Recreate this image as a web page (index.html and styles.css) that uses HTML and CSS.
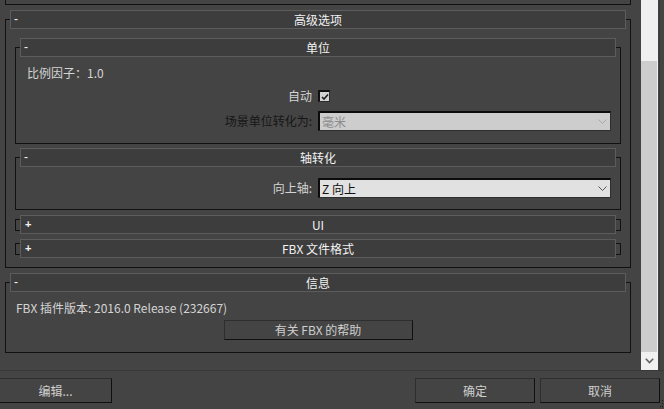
FILE: index.html
```html
<!DOCTYPE html>
<html lang="zh-CN">
<head>
    <meta charset="UTF-8">
    <title>FBX 导出 - 高级选项</title>
    <link rel="stylesheet" href="styles.css">
</head>
<body>
    <div class="main">
        <div class="panel">
            <div class="stub"></div>

            <!-- 高级选项 -->
            <section class="rollout top">
                <div class="rollout-head"><span class="sign">-</span><span class="title">高级选项</span></div>

                <section class="rollout sub unit">
                    <div class="rollout-head"><span class="sign">-</span><span class="title">单位</span></div>
                    <div class="scale">比例因子：1.0</div>
                    <div class="field-row check-row">
                        <span class="label">自动</span>
                        <span class="check">
                            <svg width="8" height="8" viewBox="0 0 8 8"><path d="M1 4 L3 6 L7 1.5" fill="none" stroke="#1e1e1e" stroke-width="1.6"/></svg>
                        </span>
                    </div>
                    <div class="field-row combo-row">
                        <span class="label disabled">场景单位转化为:</span>
                        <div class="combo off">
                            <span>毫米</span>
                            <svg class="chev" width="9" height="5" viewBox="0 0 9 5"><path d="M0.5 0.5 L4.5 4.5 L8.5 0.5" fill="none" stroke="#a8a8a8"/></svg>
                        </div>
                    </div>
                </section>

                <section class="rollout sub axis">
                    <div class="rollout-head"><span class="sign">-</span><span class="title">轴转化</span></div>
                    <div class="field-row combo-row">
                        <span class="label">向上轴:</span>
                        <div class="combo">
                            <span>Z 向上</span>
                            <svg class="chev" width="9" height="5" viewBox="0 0 9 5"><path d="M0.5 0.5 L4.5 4.5 L8.5 0.5" fill="none" stroke="#555"/></svg>
                        </div>
                    </div>
                </section>

                <section class="rollout sub closed ui">
                    <div class="rollout-head"><span class="sign plus">+</span><span class="title">UI</span></div>
                </section>

                <section class="rollout sub closed fmt">
                    <div class="rollout-head"><span class="sign plus">+</span><span class="title">FBX 文件格式</span></div>
                </section>
            </section>

            <!-- 信息 -->
            <section class="rollout top info">
                <div class="rollout-head"><span class="sign">-</span><span class="title">信息</span></div>
                <div class="version">FBX 插件版本: 2016.0 Release (232667)</div>
                <button class="btn help">有关 FBX 的帮助</button>
            </section>
        </div>

        <div class="scrollbar">
            <div class="sb-track"></div>
            <div class="sb-thumb"></div>
            <div class="sb-down">
                <svg width="9" height="6" viewBox="0 0 9 6"><path d="M0.8 0.8 L4.5 4.5 L8.2 0.8" fill="none" stroke="#606060" stroke-width="1.6"/></svg>
            </div>
        </div>
        <div class="edge"></div>
    </div>

    <div class="footer">
        <button class="btn edit">编辑...</button>
        <div class="spacer"></div>
        <button class="btn ok">确定</button>
        <button class="btn cancel">取消</button>
    </div>

    <svg class="grip" width="4" height="8" viewBox="0 0 4 8">
        <rect x="2" y="0" width="1" height="1" fill="#1e1e1e"/>
        <rect x="2" y="3" width="1" height="1" fill="#1e1e1e"/>
        <rect x="0" y="6" width="1" height="1" fill="#1e1e1e"/>
        <rect x="2" y="6" width="1" height="1" fill="#1e1e1e"/>
    </svg>
</body>
</html>
```

FILE: styles.css
```css
body {
    margin: 0;
    width: 664px;
    height: 409px;
    overflow: hidden;
    position: relative;
    background: #444444;
    color: #d4d4d4;
    font-family: "Noto Sans CJK SC", sans-serif;
    font-size: 12px;
    line-height: 16px;
}

.main {
    display: flex;
    height: 370px;
    border-bottom: 1px solid #393939;
}
.panel {
    width: 641px;
    height: 370px;
    overflow: hidden;
}
.stub {
    margin-left: 5px;
    width: 626px;
    height: 5px;
    box-sizing: border-box;
    border: 1px solid #111;
    border-top: none;
}

/* rollouts */
.rollout {
    box-sizing: border-box;
    border: 1px solid #111;
}
.rollout.top {
    margin: 14px 0 0 5px;
    width: 626px;
    padding: 0 4px 12px;
}
.rollout-head {
    height: 19px;
    box-sizing: border-box;
    margin-top: -10px;
    background: #3d3d3d;
    border: 1px solid #5c5c5c;
    display: grid;
    grid-template-columns: 14px 1fr 14px;
    align-items: center;
    line-height: 17px;
    color: #f2f2f2;
}
.sign {
    padding-left: 3px;
    font-family: "Liberation Sans", sans-serif;
    font-size: 12px;
    color: #f4f4f4;
}
.sign.plus {
    padding-left: 4px;
    font-size: 11px;
    font-weight: bold;
}
.title {
    text-align: center;
}

.sub {
    margin: 0 5px;
    padding: 0 4px;
}
.unit {
    margin-top: 18px;
    padding-bottom: 12px;
}
.axis {
    margin-top: 13px;
    padding-bottom: 11px;
}
.closed {
    height: 12px;
}
.closed .rollout-head {
    margin-top: -5px;
}
.ui {
    margin-top: 9px;
}
.fmt {
    margin-top: 12px;
}

/* fields */
.scale {
    margin: 8px 0 0 7px;
}
.field-row {
    display: grid;
    grid-template-columns: 1fr 293px;
    column-gap: 6px;
    margin-right: 5px;
    align-items: center;
}
.label {
    text-align: right;
}
.label.disabled {
    color: #161616;
}
.check-row {
    margin-top: 7px;
    height: 16px;
}
.check {
    width: 12px;
    height: 12px;
    box-sizing: border-box;
    border-style: solid;
    border-width: 2px 1px 1px 2px;
    border-color: #111 #2c2c2c #2c2c2c #111;
    background: #d2d2d2;
    display: flex;
    align-items: center;
    justify-content: center;
}
.unit .combo-row {
    margin-top: 7px;
}
.axis .combo-row {
    margin-top: 11px;
}
.combo {
    height: 20px;
    box-sizing: border-box;
    border-style: solid;
    border-width: 2px 1px 1px 2px;
    border-color: #0c0c0c #2e2e2e #2e2e2e #0c0c0c;
    background: #e1e1e1;
    color: #111;
    display: flex;
    align-items: center;
    justify-content: space-between;
    padding: 0 3px 0 2px;
    line-height: 16px;
}
.combo.off {
    background: #cdcdcd;
    color: #8c8c8c;
}

/* info */
.info {
    padding-bottom: 8px;
}
.version {
    margin: 8px 0 0 6px;
}
.btn {
    display: block;
    box-sizing: border-box;
    background: #444444;
    border-style: solid;
    border-width: 1px;
    border-color: #2e2e2e #101010 #101010 #2e2e2e;
    color: #cfcfcf;
    font-family: "Noto Sans CJK SC", sans-serif;
    font-size: 12px;
    line-height: 16px;
    padding: 0;
}
.help {
    width: 189px;
    height: 20px;
    margin: 4px auto 0;
}

/* scrollbar */
.scrollbar {
    width: 17px;
    display: flex;
    flex-direction: column;
    background: #f0f0f0;
}
.sb-track {
    height: 61px;
}
.sb-thumb {
    flex: 1;
    margin-right: 1px;
    background: #cdcdcd;
}
.sb-down {
    height: 18px;
    display: flex;
    align-items: center;
    justify-content: center;
}
.edge {
    width: 4px;
    margin-left: 1px;
    border-left: 1px solid #393939;
}

/* footer */
.footer {
    display: flex;
    padding-top: 7px;
}
.footer .btn {
    height: 25px;
    width: 120px;
}
.footer .edit {
    width: 113px;
    margin-left: -1px;
}
.spacer {
    flex: 1;
}
.footer .cancel {
    margin: 0 4px 0 5px;
}
.grip {
    position: absolute;
    right: 0;
    bottom: 1px;
}
```
